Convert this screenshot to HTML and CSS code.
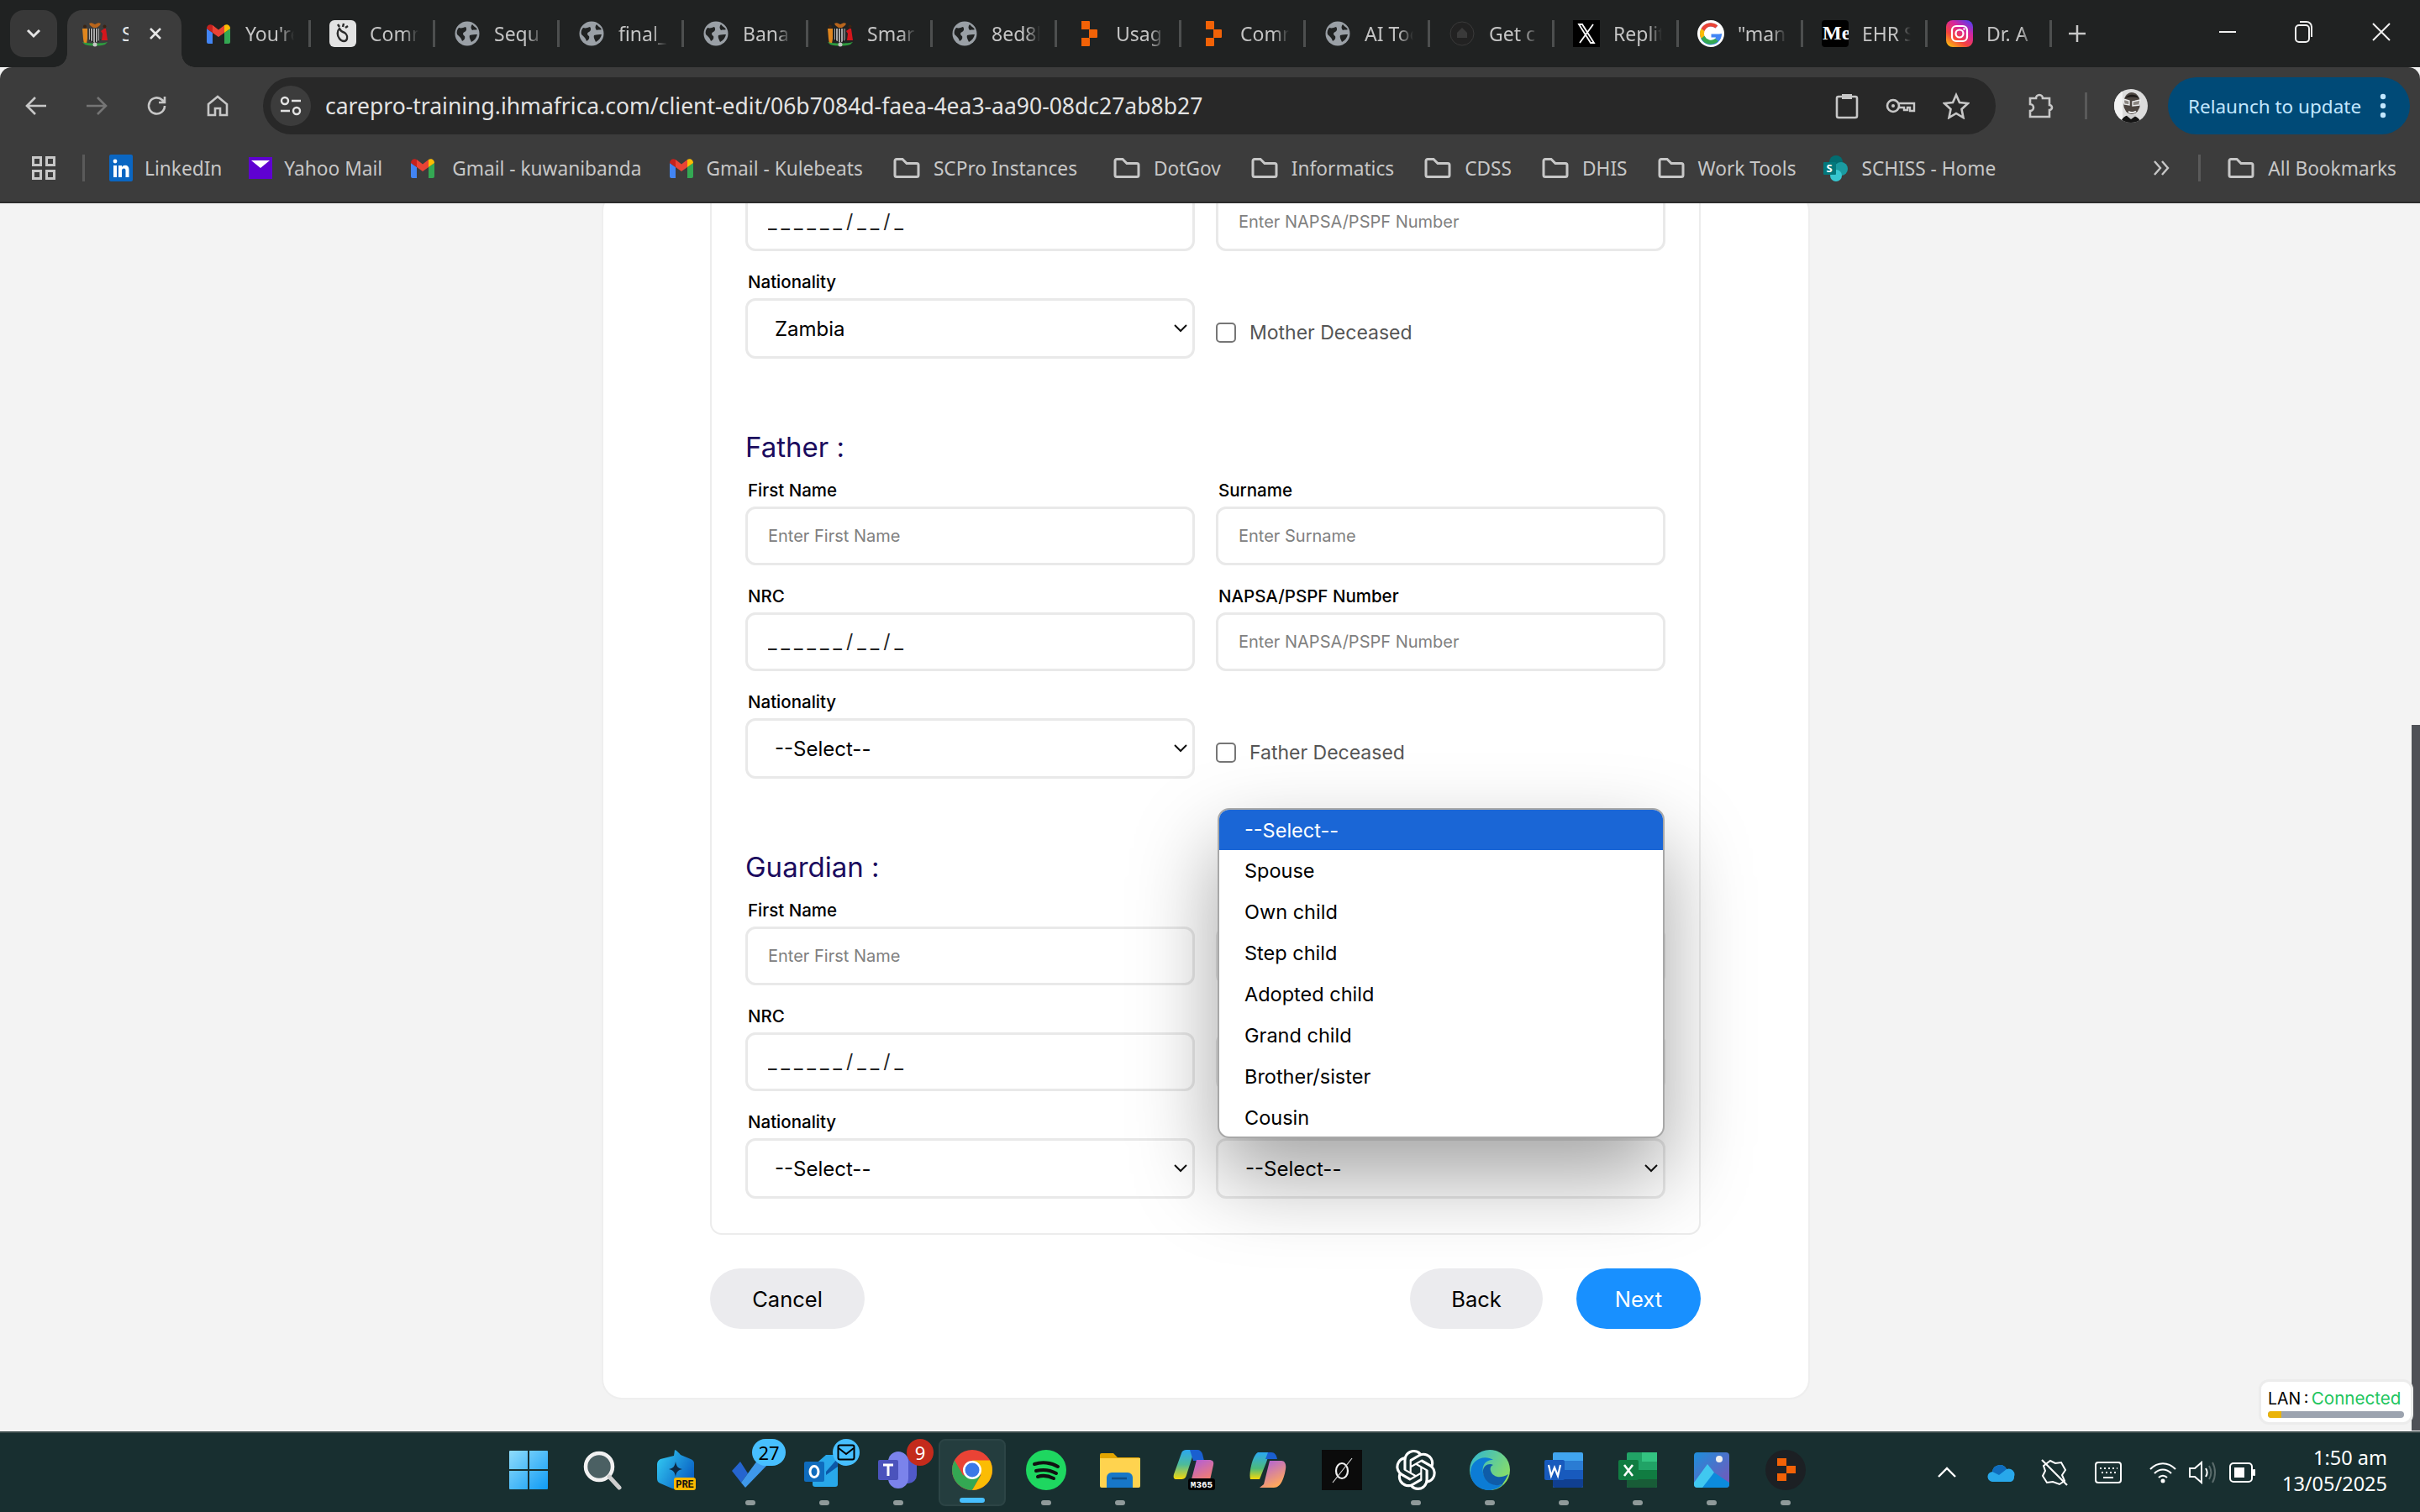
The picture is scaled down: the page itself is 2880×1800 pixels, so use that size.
FILE: index.html
```html
<!DOCTYPE html>
<html lang="en">

<head>
    <meta charset="UTF-8" />
    <title>Client Edit | SmartCare Pro</title>
    <link rel="stylesheet" href="styles.css">
</head>

<body>
    <svg class="defs" width="0" height="0">
        <symbol id="globe" viewBox="0 0 32 32">
            <circle cx="16" cy="16" r="14.5" fill="#9aa0a6" />
            <path fill="#202222" d="M6 9c3 1 5 0 8-1 2 2 1 5-1 6-3 1-2 4 0 5 1 3-1 5-3 6-1-4-4-6-6-8-1-3 0-6 2-8zM22 5c1 2 4 3 6 6-2 1-4 0-6 1-2-2-2-5 0-7zM19 18c3-1 6-1 9-1-1 4-3 7-7 9-1-3-3-5-2-8z" />
        </symbol>
        <symbol id="gmail" viewBox="0 0 32 32">
            <path fill="#4285f4" d="M2 28V10l7 5v13H4a2 2 0 0 1-2-2z" />
            <path fill="#34a853" d="M23 28V15l7-5v16a2 2 0 0 1-2 2z" />
            <path fill="#ea4335" d="M9 15l7 5 7-5V6l-7 5.500L9 6z" />
            <path fill="#c5221f" d="M2 10c0-4 4-6 7-4v9z" />
            <path fill="#fbbc04" d="M30 10c0-4-4-6-7-4v9z" />
        </symbol>
        <symbol id="replit" viewBox="0 0 32 32">
            <path fill="#f26207" d="M7 1h9a1 1 0 0 1 1 1v8a1 1 0 0 1-1 1H7zM16 11h9a1 1 0 0 1 1 1v8a1 1 0 0 1-1 1h-9zM7 21h9a1 1 0 0 1 1 1v8a1 1 0 0 1-1 1H7z" />
        </symbol>
        <symbol id="arms" viewBox="0 0 32 32">
            <path fill="#b8651c" d="M9 4c3-2 5 0 7 1 2-1 4-3 7-1-1 3-4 4-5 5h-4c-1-1-4-2-5-5z" />
            <path fill="#e0861e" d="M1 10h6v12l-1 6H3l-1-6z" />
            <circle cx="4" cy="7.500" r="2" fill="#3a2414" />
            <path fill="#d4161c" d="M27 10h2l2 14h-7l1-8-2-3z" />
            <circle cx="27.500" cy="7.500" r="2" fill="#3a2414" />
            <path fill="#e8e8e8" d="M9 10h14v13l-7 4-7-4z" />
            <path stroke="#111" stroke-width="1.600" d="M10.500 10v15M13.500 10v16M16.500 10v17M19.500 10v16M22 10v14" fill="none" />
            <path fill="#2f9b3f" d="M1 26c6 2 24 2 30 0l-3 3c-6 2-18 2-24 0z" />
            <circle cx="16" cy="29" r="2.500" fill="#c4c4c4" />
        </symbol>
        <symbol id="folder" viewBox="0 0 32 24">
            <path fill="none" stroke="#c7c7c7" stroke-width="3" d="M2 3.500a2 2 0 0 1 2-2h7l5 5h12a2 2 0 0 1 2 2v12a2 2 0 0 1-2 2H4a2 2 0 0 1-2-2z" />
        </symbol>
        <symbol id="chevron" viewBox="0 0 16 10">
            <path d="M1 1l7 7 7-7" fill="none" stroke="#111" stroke-width="2" />
        </symbol>
    </svg>

    <!-- browser chrome -->
    <div class="tabstrip">
        <div class="tab-search">
            <svg width="18" height="12" viewBox="0 0 18 12"><path d="M2 2l7 7 7-7" fill="none" stroke="#e3e3e3" stroke-width="3" /></svg>
        </div>
        <div class="tab active">
            <svg class="fav" width="32" height="32"><use href="#arms" /></svg>
            <span class="tab-title">SmartCare</span>
            <svg class="tab-close" width="16" height="16" viewBox="0 0 16 16"><path d="M2 2l12 12M14 2L2 14" stroke="#e8e8e8" stroke-width="2.500" /></svg>
        </div>
        <div class="tab first">
            <svg class="fav" width="32" height="32"><use href="#gmail" /></svg>
            <span class="tab-title">You're</span>
        </div>
        <div class="tab">
            <svg class="fav" width="32" height="32" viewBox="0 0 32 32"><rect width="32" height="32" rx="6" fill="#e3e3e3" /><path d="M12 10c-3 3-3 8 0 12s8 4 9 0-2-7-5-8-3-3-4-4zM10 5l2 3M17 4l-1 4M22 7l-3 2" fill="none" stroke="#2a2a2a" stroke-width="2.400" /></svg>
            <span class="tab-title">Comm</span>
        </div>
        <div class="tab">
            <svg class="fav" width="32" height="32"><use href="#globe" /></svg>
            <span class="tab-title">Sequ</span>
        </div>
        <div class="tab">
            <svg class="fav" width="32" height="32"><use href="#globe" /></svg>
            <span class="tab-title">final_</span>
        </div>
        <div class="tab">
            <svg class="fav" width="32" height="32"><use href="#globe" /></svg>
            <span class="tab-title">Bana</span>
        </div>
        <div class="tab">
            <svg class="fav" width="32" height="32"><use href="#arms" /></svg>
            <span class="tab-title">Smar</span>
        </div>
        <div class="tab">
            <svg class="fav" width="32" height="32"><use href="#globe" /></svg>
            <span class="tab-title">8ed8b</span>
        </div>
        <div class="tab">
            <svg class="fav" width="32" height="32"><use href="#replit" /></svg>
            <span class="tab-title">Usag</span>
        </div>
        <div class="tab">
            <svg class="fav" width="32" height="32"><use href="#replit" /></svg>
            <span class="tab-title">Comm</span>
        </div>
        <div class="tab">
            <svg class="fav" width="32" height="32"><use href="#globe" /></svg>
            <span class="tab-title">AI Too</span>
        </div>
        <div class="tab">
            <svg class="fav" width="32" height="32" viewBox="0 0 32 32"><circle cx="16" cy="16" r="14" fill="#222" stroke="#3a3a3a" /><path d="M10 15l6-6 6 6v6H10z" fill="#3a3a3a" /></svg>
            <span class="tab-title">Get c</span>
        </div>
        <div class="tab">
            <svg class="fav" width="32" height="32" viewBox="0 0 32 32"><rect width="32" height="32" fill="#000" /><path d="M7 5h4l14 22h-4zM24 5L8 27" fill="none" stroke="#fff" stroke-width="1.800" /></svg>
            <span class="tab-title">Replit</span>
        </div>
        <div class="tab">
            <svg class="fav" width="32" height="32" viewBox="0 0 32 32"><circle cx="16" cy="16" r="16" fill="#fff" /><path d="M26 16.500H16.500v4h5.500c-.7 2.500-3 4-6 4a8.500 8.500 0 0 1 0-17c2 0 4 .8 5.300 2l3-3A13 13 0 1 0 29 16z" fill="#4285f4" /><path d="M4.500 10l4 3c1.300-3.200 4-5.500 7.500-5.500 2 0 4 .8 5.300 2l3-3A13 13 0 0 0 4.500 10z" fill="#ea4335" /><path d="M4.500 10a13 13 0 0 0 0 12l4-3.200a8.600 8.600 0 0 1 0-5.800z" fill="#fbbc04" /><path d="M4.500 22A13 13 0 0 0 25 25l-3.800-3a8.500 8.500 0 0 1-12.700-3.200z" fill="#34a853" /></svg>
            <span class="tab-title">"man</span>
        </div>
        <div class="tab">
            <svg class="fav" width="32" height="32" viewBox="0 0 32 32"><rect width="32" height="32" rx="4" fill="#000" /><text x="1" y="23" class="me-text">Me</text></svg>
            <span class="tab-title">EHR S</span>
        </div>
        <div class="tab">
            <svg class="fav" width="32" height="32" viewBox="0 0 32 32"><defs><linearGradient id="ig" x1="0.100" y1="1" x2="0.800" y2="0"><stop offset="0" stop-color="#fdc30d" /><stop offset="0.350" stop-color="#f5433f" /><stop offset="0.700" stop-color="#d6249f" /><stop offset="1" stop-color="#5b3dea" /></linearGradient></defs><rect width="32" height="32" rx="8" fill="url(#ig)" /><rect x="7" y="7" width="18" height="18" rx="5" fill="none" stroke="#fff" stroke-width="2.200" /><circle cx="16" cy="16" r="4.500" fill="none" stroke="#fff" stroke-width="2.200" /><circle cx="21.500" cy="10.500" r="1.200" fill="#fff" /></svg>
            <span class="tab-title">Dr. A</span>
        </div>
        <div class="tab-new">
            <svg width="20" height="20" viewBox="0 0 20 20"><path d="M10 0v20M0 10h20" stroke="#c7c7c7" stroke-width="2.500" /></svg>
        </div>
        <div class="win-controls">
            <svg width="20" height="20" viewBox="0 0 20 20"><path d="M0 10h20" stroke="#f0f0f0" stroke-width="2" /></svg>
            <svg width="22" height="26" viewBox="0 0 22 26"><rect x="1" y="5" width="16" height="20" rx="4" fill="none" stroke="#f0f0f0" stroke-width="2" /><path d="M6 1h8a6 6 0 0 1 6 6v12" fill="none" stroke="#f0f0f0" stroke-width="2" /></svg>
            <svg width="22" height="22" viewBox="0 0 22 22"><path d="M1 1l20 20M21 1L1 21" stroke="#f0f0f0" stroke-width="2" /></svg>
        </div>
    </div>

    <div class="toolbar">
        <div class="nav-btns">
            <svg width="26" height="24" viewBox="0 0 26 24"><path d="M25 12H3M12 2L2 12l10 10" fill="none" stroke="#c7c7c7" stroke-width="2.600" /></svg>
            <svg width="26" height="24" viewBox="0 0 26 24"><path d="M1 12h22M14 2l10 10-10 10" fill="none" stroke="#757575" stroke-width="2.600" /></svg>
            <svg width="26" height="26" viewBox="0 0 26 26"><path d="M22 13a9.500 9.500 0 1 1-3-7l3 3M22 2v7h-7" fill="none" stroke="#c7c7c7" stroke-width="2.600" /></svg>
            <svg width="26" height="26" viewBox="0 0 26 26"><path d="M2 11l11-9 11 9v13h-8v-8h-6v8H2z" fill="none" stroke="#c7c7c7" stroke-width="2.600" /></svg>
        </div>
        <div class="omnibox">
            <div class="site-info">
                <svg width="26" height="24" viewBox="0 0 26 24"><circle cx="6" cy="6" r="4" fill="none" stroke="#e3e3e3" stroke-width="2.400" /><path d="M14 6h11M1 18h11" stroke="#e3e3e3" stroke-width="2.400" /><circle cx="20" cy="18" r="4" fill="none" stroke="#e3e3e3" stroke-width="2.400" /></svg>
            </div>
            <span class="url">carepro-training.ihmafrica.com/client-edit/06b7084d-faea-4ea3-aa90-08dc27ab8b27</span>
            <div class="omni-icons">
                <svg width="28" height="32" viewBox="0 0 28 32"><rect x="2" y="5" width="24" height="25" rx="2" fill="none" stroke="#c7c7c7" stroke-width="2.600" /><path d="M8 2h12v6H8z" fill="#c7c7c7" /></svg>
                <svg width="36" height="20" viewBox="0 0 36 20"><circle cx="9" cy="10" r="7" fill="none" stroke="#c7c7c7" stroke-width="2.600" /><circle cx="9" cy="10" r="2" fill="#c7c7c7" /><path d="M16 7h18v9h-5v-4h-3v3h-4v-3h-6" fill="none" stroke="#c7c7c7" stroke-width="2.400" /></svg>
                <svg width="32" height="32" viewBox="0 0 32 32"><path d="M16 3l4 9 10 1-7.500 7 2 10L16 25l-8.500 5 2-10L2 13l10-1z" fill="none" stroke="#c7c7c7" stroke-width="2.600" /></svg>
            </div>
        </div>
        <svg class="ext-icon" width="32" height="32" viewBox="0 0 32 32"><path d="M3 7h7a4 4 0 0 1 8 0h8v8a3 3 0 0 1 0 6v8H3v-7a4 4 0 0 0 0-8z" fill="none" stroke="#c7c7c7" stroke-width="2.600" /></svg>
        <div class="tb-sep"></div>
        <svg class="avatar" width="40" height="40" viewBox="0 0 40 40"><defs><clipPath id="av"><circle cx="20" cy="20" r="20" /></clipPath></defs><g clip-path="url(#av)"><rect width="40" height="40" fill="#dcdcdc" /><path d="M0 0h10v40H0z" fill="#f2f2f2" /><path d="M8 40c1-6 6-9 11-9s11 3 13 9z" fill="#141414" /><path d="M14 31l6 5 7-5z" fill="#cfcfcf" /><ellipse cx="21" cy="17" rx="10" ry="13" fill="#4c4540" /><path d="M13 11c3-5 13-6 17 0-5-2-12-2-17 0z" fill="#1d1a18" /><path d="M11 12l7 2v5l-6-1zM22 15l9-2-1 6-8 1z" fill="#8a8580" stroke="#eaeaea" stroke-width="1.400" /><path d="M17 27c3 1.500 6 1.500 9-.5" stroke="#e8e8e8" stroke-width="2" fill="none" /></g></svg>
        <div class="relaunch">
            <span>Relaunch to update</span>
            <svg width="10" height="30" viewBox="0 0 10 30"><circle cx="5" cy="4" r="3.200" fill="#c2e7ff" /><circle cx="5" cy="15" r="3.200" fill="#c2e7ff" /><circle cx="5" cy="26" r="3.200" fill="#c2e7ff" /></svg>
        </div>
    </div>

    <div class="bookmarks">
        <svg class="apps" width="28" height="28" viewBox="0 0 28 28"><path d="M1.500 1.500h9v9h-9zM17.500 1.500h9v9h-9zM1.500 17.500h9v9h-9zM17.500 17.500h9v9h-9z" fill="none" stroke="#c7c7c7" stroke-width="3" /></svg>
        <div class="bm-sep"></div>
        <a class="bm">
            <svg width="28" height="32" viewBox="0 0 28 32"><rect width="28" height="32" rx="2" fill="#0a66c2" /><path d="M5 13h4v14H5zM11 13h4v2c1-1.500 2-2.200 4-2.200 3 0 4.500 2 4.500 5V27h-4v-8c0-1.500-.6-2.500-2-2.500s-2.500 1-2.500 2.500v8h-4z" fill="#fff" /><circle cx="7" cy="8" r="2.400" fill="#fff" /></svg>
            LinkedIn
        </a>
        <a class="bm">
            <svg width="28" height="28" viewBox="0 0 28 28"><rect y="1" width="28" height="26" fill="#5f01d1" /><path d="M3 5h22l-11 9z" fill="#fff" /></svg>
            Yahoo Mail
        </a>
        <a class="bm gm">
            <svg width="32" height="32"><use href="#gmail" /></svg>
            Gmail - kuwanibanda
        </a>
        <a class="bm gm second">
            <svg width="32" height="32"><use href="#gmail" /></svg>
            Gmail - Kulebeats
        </a>
        <a class="bm folder wide"><svg width="32" height="24"><use href="#folder" /></svg>SCPro Instances</a>
        <a class="bm folder"><svg width="32" height="24"><use href="#folder" /></svg>DotGov</a>
        <a class="bm folder"><svg width="32" height="24"><use href="#folder" /></svg>Informatics</a>
        <a class="bm folder"><svg width="32" height="24"><use href="#folder" /></svg>CDSS</a>
        <a class="bm folder"><svg width="32" height="24"><use href="#folder" /></svg>DHIS</a>
        <a class="bm folder tight"><svg width="32" height="24"><use href="#folder" /></svg>Work Tools</a>
        <a class="bm">
            <svg width="32" height="32" viewBox="0 0 32 32"><circle cx="15" cy="9" r="8" fill="#036c70" /><circle cx="21" cy="17" r="8" fill="#1a9ba1" /><circle cx="15" cy="25" r="7" fill="#37c6d0" /><rect x="0" y="9" width="15" height="15" rx="1" fill="#03787c" /><text x="3.500" y="21" class="sp-text">S</text></svg>
            SCHISS - Home
        </a>
        <div class="bm-right">
            <svg width="20" height="20" viewBox="0 0 20 20"><path d="M2 2l7 8-7 8M11 2l7 8-7 8" fill="none" stroke="#c7c7c7" stroke-width="2.400" /></svg>
            <div class="bm-sep"></div>
            <a class="bm folder"><svg width="32" height="24"><use href="#folder" /></svg>All Bookmarks</a>
        </div>
    </div>

    <!-- page -->
    <div class="page">
        <div class="page-main">
            <div class="card">
                <div class="form-box">
                    <div class="row">
                        <div class="field"><input class="mask" type="text" value="______/__/_" /></div>
                        <div class="field"><input type="text" placeholder="Enter NAPSA/PSPF Number" /></div>
                    </div>
                    <div class="row">
                        <div class="field">
                            <label>Nationality</label>
                            <div class="select-wrap">
                                <select><option>Zambia</option></select>
                                <svg width="16" height="10"><use href="#chevron" /></svg>
                            </div>
                        </div>
                        <label class="check"><input type="checkbox" />Mother Deceased</label>
                    </div>

                    <h3>Father :</h3>
                    <div class="row no-top">
                        <div class="field"><label>First Name</label><input type="text" placeholder="Enter First Name" /></div>
                        <div class="field"><label>Surname</label><input type="text" placeholder="Enter Surname" /></div>
                    </div>
                    <div class="row">
                        <div class="field"><label>NRC</label><input class="mask" type="text" value="______/__/_" /></div>
                        <div class="field"><label>NAPSA/PSPF Number</label><input type="text" placeholder="Enter NAPSA/PSPF Number" /></div>
                    </div>
                    <div class="row">
                        <div class="field">
                            <label>Nationality</label>
                            <div class="select-wrap">
                                <select><option>--Select--</option></select>
                                <svg width="16" height="10"><use href="#chevron" /></svg>
                            </div>
                        </div>
                        <label class="check"><input type="checkbox" />Father Deceased</label>
                    </div>

                    <h3>Guardian :</h3>
                    <!-- the right column of these rows sits under the open list -->
                    <div class="row no-top">
                        <div class="field"><label>First Name</label><input type="text" placeholder="Enter First Name" /></div>
                        <div class="field"><label></label><input type="text" /></div>
                    </div>
                    <div class="row">
                        <div class="field"><label>NRC</label><input class="mask" type="text" value="______/__/_" /></div>
                        <div class="field"><label></label><input type="text" /></div>
                    </div>
                    <div class="row">
                        <div class="field">
                            <label>Nationality</label>
                            <div class="select-wrap">
                                <select><option>--Select--</option></select>
                                <svg width="16" height="10"><use href="#chevron" /></svg>
                            </div>
                        </div>
                        <div class="field">
                            <label></label>
                            <div class="select-wrap">
                                <select><option>--Select--</option></select>
                                <svg width="16" height="10"><use href="#chevron" /></svg>
                                <ul class="dropdown">
                                    <li class="selected">--Select--</li>
                                    <li>Spouse</li>
                                    <li>Own child</li>
                                    <li>Step child</li>
                                    <li>Adopted child</li>
                                    <li>Grand child</li>
                                    <li>Brother/sister</li>
                                    <li>Cousin</li>
                                </ul>
                            </div>
                        </div>
                    </div>
                </div>

                <div class="form-actions">
                    <button class="btn">Cancel</button>
                    <div class="actions-right">
                        <button class="btn back">Back</button>
                        <button class="btn primary">Next</button>
                    </div>
                </div>
            </div>
        </div>
        <div class="scrollbar"><div class="thumb"></div></div>

        <div class="lan-status">
            <div class="lan-text">LAN : <span>Connected</span></div>
            <div class="lan-bar"><div class="lan-fill"></div></div>
        </div>
    </div>

    <!-- windows taskbar -->
    <div class="taskbar">
        <div class="tb-apps">
            <div class="tb-item">
                <svg width="46" height="46" viewBox="0 0 46 46"><defs><linearGradient id="win" x1="0" y1="0" x2="1" y2="1"><stop offset="0" stop-color="#8fdcfb" /><stop offset="1" stop-color="#0f9bf5" /></linearGradient></defs><path fill="url(#win)" d="M1 0h21v22H0V1a1 1 0 0 1 1-1zM24 0h21a1 1 0 0 1 1 1v21H24zM0 24h22v22H1a1 1 0 0 1-1-1zM24 24h22v21a1 1 0 0 1-1 1H24z" /></svg>
            </div>
            <div class="tb-item">
                <svg width="48" height="48" viewBox="0 0 48 48"><circle cx="20" cy="20" r="16" fill="#4b6063" stroke="#f1f1f1" stroke-width="4.500" /><path d="M32 32l12 13" stroke="#cfcfcf" stroke-width="5" stroke-linecap="round" /></svg>
            </div>
            <div class="tb-item">
                <svg width="46" height="48" viewBox="0 0 46 48"><defs><linearGradient id="cpre" x1="0" y1="0" x2="1" y2="0.600"><stop offset="0" stop-color="#35d0f5" /><stop offset="1" stop-color="#0a62c4" /></linearGradient></defs><path fill="url(#cpre)" d="M21 0c3 1 5 4 7 6l12 5c3 1 4 3 4 5v19c0 3-2 5-4 6l-13 5c-3 1-6 1-9 0L4 40c-3-1-4-3-4-6V17c0-3 2-5 4-6l16-4z" /><path fill="#0e2a44" d="M22 14c1 6 3 8 8 9-5 1-7 3-8 9-1-6-3-8-8-9 5-1 7-3 8-9z" /><rect x="20" y="33" width="26" height="15" rx="3" fill="#fdb900" /><text x="33" y="45" class="pre-text">PRE</text></svg>
            </div>
            <div class="tb-item running">
                <svg width="44" height="42" viewBox="0 0 44 42"><path fill="#2564cf" d="M0 22l10-11 9 14-8 11z" /><path fill="#3f98ea" d="M11 36L33 6l11 7-28 29z" /></svg>
                <span class="badge blue">27</span>
            </div>
            <div class="tb-item running">
                <svg width="48" height="40" viewBox="0 0 48 40"><path fill="#28a8ea" d="M10 16L26 2h14v35a3 3 0 0 1-3 3H13a3 3 0 0 1-3-3z" /><path fill="#0c58a8" d="M26 22l14-16v10L26 26z" /><rect y="10" width="24" height="24" rx="2" fill="#0f6cbd" /><ellipse cx="12" cy="22" rx="5" ry="6.500" fill="none" stroke="#fff" stroke-width="3" /></svg>
                <span class="badge blue mail"><svg width="22" height="20" viewBox="0 0 22 20"><rect x="1.500" y="1.500" width="19" height="17" rx="2" fill="none" stroke="#000" stroke-width="2" /><path d="M2 5l9 7 9-7" fill="none" stroke="#000" stroke-width="2" /></svg></span>
            </div>
            <div class="tb-item running">
                <svg width="48" height="44" viewBox="0 0 48 44"><rect x="22" y="6" width="24" height="32" rx="10" fill="#5059c9" /><rect x="12" y="0" width="24" height="44" rx="12" fill="#7b83eb" /><rect y="10" width="24" height="24" rx="2" fill="#4b53bc" /><path d="M6 16h12M12 16v13" stroke="#fff" stroke-width="3" /></svg>
                <span class="badge red">9</span>
            </div>
            <div class="tb-item running active-app">
                <svg width="48" height="48" viewBox="0 0 48 48"><circle cx="24" cy="24" r="24" fill="#ea4335" /><path fill="#34a853" d="M3 12.500A24 24 0 0 0 24 48l10.500-18L24 33 13 30z" /><path fill="#fbbc04" d="M24 48A24 24 0 0 0 45 12.500H24l10.500 17.500z" /><circle cx="24" cy="24" r="11" fill="#fff" /><circle cx="24" cy="24" r="8.500" fill="#3b78e7" /></svg>
            </div>
            <div class="tb-item running">
                <svg width="48" height="48" viewBox="0 0 48 48"><circle cx="24" cy="24" r="24" fill="#1ed760" /><path d="M10 17c9-3 20-2 28 3M12 25c8-2 17-1 24 3M14 32c6-2 13-1 19 2" fill="none" stroke="#111" stroke-width="4" stroke-linecap="round" /></svg>
            </div>
            <div class="tb-item running">
                <svg width="48" height="42" viewBox="0 0 48 42"><path d="M0 3a2 2 0 0 1 2-2h14l5 5h25a2 2 0 0 1 2 2v5H0z" fill="#e3a500" /><path d="M0 7h48v33a2 2 0 0 1-2 2H2a2 2 0 0 1-2-2z" fill="#ffd34f" /><path d="M8 42V30a6 6 0 0 1 6-6h19a6 6 0 0 1 6 6v12z" fill="#1777c8" /><path d="M14 31h18" stroke="#0f4f8a" stroke-width="2.500" /></svg>
            </div>
            <div class="tb-item">
                <svg width="50" height="48" viewBox="0 0 50 48"><defs><linearGradient id="m365" x1="0" y1="0" x2="0" y2="1"><stop offset="0" stop-color="#2ba8f2" /><stop offset="0.500" stop-color="#4dbb9a" /><stop offset="1" stop-color="#f5d90a" /></linearGradient><linearGradient id="m365b" x1="0" y1="0" x2="0.500" y2="1"><stop offset="0" stop-color="#a95be5" /><stop offset="1" stop-color="#f77f6a" /></linearGradient></defs><path fill="url(#m365)" d="M10 4c1-3 3-4 6-4h10l-3 8-7 22c-1 4-3 5-7 5H4c-3 0-4-2-3-6z" /><path fill="#1a5fd0" d="M20 0h9c3 0 5 2 6 5l2 8H24z" /><path fill="url(#m365b)" d="M28 12h15c4 0 6 2 5 6l-4 18c-1 3-3 5-6 5H18l4-6z" /><rect x="18" y="34" width="32" height="14" rx="3" fill="#000" /><text x="34" y="45" class="m365-text">M365</text></svg>
            </div>
            <div class="tb-item">
                <svg width="44" height="42" viewBox="0 0 44 42"><defs><linearGradient id="cop" x1="0" y1="0" x2="0" y2="1"><stop offset="0" stop-color="#2ba8f2" /><stop offset="0.600" stop-color="#4dbb7a" /><stop offset="1" stop-color="#f5d90a" /></linearGradient><linearGradient id="copb" x1="0" y1="0" x2="0.500" y2="1"><stop offset="0" stop-color="#a95be5" /><stop offset="1" stop-color="#ffa85c" /></linearGradient></defs><path fill="url(#cop)" d="M10 0h14l-4 12-8 20H1c-2-6 2-28 9-32z" /><path fill="#1a5fd0" d="M22 0h4c4 0 6 3 7 8h-14z" /><path fill="url(#copb)" d="M24 10h14c4 0 6 4 5 10-2 12-6 22-14 22H12l5-4z" /></svg>
            </div>
            <div class="tb-item">
                <svg width="48" height="48" viewBox="0 0 48 48"><rect width="48" height="48" fill="#0b0b0b" /><ellipse cx="24" cy="25" rx="7" ry="9" fill="none" stroke="#f0f0f0" stroke-width="2.200" /><path d="M13 39L36 10" stroke="#d8d8d8" stroke-width="1.200" /></svg>
            </div>
            <div class="tb-item running">
                <svg width="48" height="48" viewBox="0 0 24 24"><path fill="#fff" d="M22.2819 9.8211a5.9847 5.9847 0 0 0-.5157-4.9108 6.0462 6.0462 0 0 0-6.5098-2.9A6.0651 6.0651 0 0 0 4.9807 4.1818a5.9847 5.9847 0 0 0-3.9977 2.9 6.0462 6.0462 0 0 0 .7427 7.0966 5.98 5.98 0 0 0 .511 4.9107 6.051 6.051 0 0 0 6.5146 2.9001A5.9847 5.9847 0 0 0 13.2599 24a6.0557 6.0557 0 0 0 5.7718-4.2058 5.9894 5.9894 0 0 0 3.9977-2.9001 6.0557 6.0557 0 0 0-.7475-7.0729zm-9.022 12.6081a4.4755 4.4755 0 0 1-2.8764-1.0408l.1419-.0804 4.7783-2.7582a.7948.7948 0 0 0 .3927-.6813v-6.7369l2.02 1.1686a.071.071 0 0 1 .038.052v5.5826a4.504 4.504 0 0 1-4.4945 4.4944zm-9.6607-4.1254a4.4708 4.4708 0 0 1-.5346-3.0137l.142.0852 4.783 2.7582a.7712.7712 0 0 0 .7806 0l5.8428-3.3685v2.3324a.0804.0804 0 0 1-.0332.0615L9.74 19.9502a4.4992 4.4992 0 0 1-6.1408-1.6464zM2.3408 7.8956a4.485 4.485 0 0 1 2.3655-1.9728V11.6a.7664.7664 0 0 0 .3879.6765l5.8144 3.3543-2.0201 1.1685a.0757.0757 0 0 1-.071 0l-4.8303-2.7865A4.504 4.504 0 0 1 2.3408 7.872zm16.5963 3.8558L13.1038 8.364 15.1192 7.2a.0757.0757 0 0 1 .071 0l4.8303 2.7913a4.4944 4.4944 0 0 1-.6765 8.1042v-5.6772a.79.79 0 0 0-.407-.667zm2.0107-3.0231l-.142-.0852-4.7735-2.7818a.7759.7759 0 0 0-.7854 0L9.409 9.2297V6.8974a.0662.0662 0 0 1 .0284-.0615l4.8303-2.7866a4.4992 4.4992 0 0 1 6.6802 4.66zM8.3065 12.863l-2.02-1.1638a.0804.0804 0 0 1-.038-.0567V6.0742a4.4992 4.4992 0 0 1 7.3757-3.4537l-.142.0805L8.704 5.459a.7948.7948 0 0 0-.3927.6813zm1.0976-2.3654l2.602-1.4998 2.6069 1.4998v2.9994l-2.5974 1.4997-2.6067-1.4997Z" /></svg>
            </div>
            <div class="tb-item running">
                <svg width="48" height="48" viewBox="0 0 48 48"><defs><linearGradient id="edge" x1="0" y1="0" x2="1" y2="0.700"><stop offset="0" stop-color="#2cb5d6" /><stop offset="1" stop-color="#8fe060" /></linearGradient></defs><circle cx="24" cy="24" r="24" fill="url(#edge)" /><path fill="#0c7cd5" d="M1 27C1 12 17 5 28 12c-8-1-14 6-12 15 2 10 11 17 24 14-5 4-10 7-17 7C10 48 1 38 1 27z" /><path fill="#0f5ca8" d="M16 27c-1-8 7-12 12-9-3 1-4 4-3 7 2 7 11 10 21 4-2 5-5 9-7 12-11 4-22-3-23-14z" /></svg>
            </div>
            <div class="tb-item running">
                <svg width="46" height="42" viewBox="0 0 46 42"><rect x="10" y="0" width="36" height="42" rx="2" fill="#41a5ee" /><rect x="10" y="10" width="36" height="11" fill="#2b7cd3" /><rect x="10" y="21" width="36" height="11" fill="#185abd" /><path d="M10 32h36v8a2 2 0 0 1-2 2H12a2 2 0 0 1-2-2z" fill="#103f91" /><rect x="0" y="9" width="24" height="24" rx="2" fill="#185abd" /><path d="M5 15l3 13 4-10 4 10 3-13" fill="none" stroke="#fff" stroke-width="2.200" /></svg>
            </div>
            <div class="tb-item running">
                <svg width="46" height="42" viewBox="0 0 46 42"><rect x="10" y="0" width="36" height="42" rx="2" fill="#21a366" /><rect x="28" y="0" width="18" height="11" fill="#33c481" /><rect x="28" y="11" width="18" height="10" fill="#21a366" /><rect x="10" y="21" width="36" height="11" fill="#107c41" /><path d="M10 32h36v8a2 2 0 0 1-2 2H12a2 2 0 0 1-2-2z" fill="#185c37" /><rect x="0" y="9" width="24" height="24" rx="2" fill="#107c41" /><path d="M7 15l10 13M17 15L7 28" stroke="#fff" stroke-width="2.600" /></svg>
            </div>
            <div class="tb-item running">
                <svg width="42" height="42" viewBox="0 0 42 42"><defs><linearGradient id="ph" x1="0" y1="0" x2="1" y2="1"><stop offset="0" stop-color="#1d8fdc" /><stop offset="1" stop-color="#7a54b8" /></linearGradient></defs><rect width="42" height="42" rx="4" fill="url(#ph)" /><ellipse cx="30" cy="8" rx="4" ry="4" fill="#eee" /><path fill="#40c8f0" d="M0 36l16-22 8 10-12 18H4a4 4 0 0 1-4-4z" /><path fill="#0c8bdc" d="M10 42l14-18 18 12v2a4 4 0 0 1-4 4z" /></svg>
            </div>
            <div class="tb-item running">
                <svg width="48" height="48" viewBox="0 0 48 48"><circle cx="24" cy="24" r="24" fill="#1c2024" /><path fill="#f26207" d="M14 10h11v9H14zM25 19h11v9H25zM14 28h11v9H14z" /></svg>
            </div>
        </div>

        <div class="tray">
            <svg class="t-caret" width="24" height="14" viewBox="0 0 24 14"><path d="M2 12L12 2l10 10" fill="none" stroke="#fff" stroke-width="2.400" /></svg>
            <svg class="t-cloud" width="34" height="22" viewBox="0 0 34 22"><path d="M8 22a6 6 0 0 1-1-12 9 9 0 0 1 17-3 7 7 0 0 1 9 9 6 6 0 0 1-4 6z" fill="#28a8ea" /><path d="M7 10a9 9 0 0 1 17-3l-9 7z" fill="#0f6cbd" /></svg>
            <svg class="t-net" width="34" height="34" viewBox="0 0 34 34"><path d="M12 3l6 3 7-1 5 9-4 6 3 7-6 4-8-3-7 1-5-8 3-6-2-6z" fill="none" stroke="#fff" stroke-width="2" /><path d="M2 2l30 30" stroke="#fff" stroke-width="2.200" /></svg>
            <svg class="t-kbd" width="32" height="26" viewBox="0 0 32 26"><rect x="1" y="1" width="30" height="24" rx="3" fill="none" stroke="#fff" stroke-width="2" /><path d="M6 8h2M11 8h2M16 8h2M21 8h2M26 8h1M8 13h2M13 13h2M18 13h2M23 13h2M10 19h12" stroke="#fff" stroke-width="2" /></svg>
            <svg class="t-wifi" width="32" height="26" viewBox="0 0 32 26"><path d="M1 9c9-9 21-9 30 0M6 14c6-6 14-6 20 0M11 19c3-3 7-3 10 0" fill="none" stroke="#fff" stroke-width="2.200" /><circle cx="16" cy="23" r="2.500" fill="#fff" /></svg>
            <svg class="t-vol" width="32" height="28" viewBox="0 0 32 28"><path d="M1 9h6l8-7v24l-8-7H1z" fill="none" stroke="#fff" stroke-width="2" /><path d="M20 9c2 3 2 7 0 10" fill="none" stroke="#fff" stroke-width="2" /><path d="M24 6c3 5 3 11 0 16M28 2c4 7 4 17 0 24" fill="none" stroke="#5a6b6b" stroke-width="2" /></svg>
            <svg class="t-batt" width="32" height="24" viewBox="0 0 32 24"><rect x="1" y="1" width="26" height="22" rx="4" fill="none" stroke="#fff" stroke-width="2" /><rect x="6" y="6" width="12" height="12" fill="#fff" /><rect x="28" y="8" width="3" height="8" rx="1" fill="#fff" /></svg>
            <div class="clock">
                <div>1:50 am</div>
                <div>13/05/2025</div>
            </div>
        </div>
    </div>
</body>

</html>
```

FILE: styles.css
```css
* {
    box-sizing: border-box;
}

html,
body {
    margin: 0;
    height: 1800px;
    overflow: hidden;
}

body {
    display: flex;
    flex-direction: column;
    font-family: "Inter", sans-serif;
    background: #f3f3f3;
}

.defs {
    position: absolute;
}

/* tabs */
.tabstrip {
    height: 80px;
    flex: none;
    background: #202222;
    display: flex;
    align-items: flex-start;
    padding: 12px 0 0 12px;
    font-family: "Noto Sans", sans-serif;
    font-size: 23px;
    color: #c4c4c4;
}

.tab-search {
    width: 56px;
    height: 56px;
    border-radius: 16px;
    background: #383838;
    margin-right: 12px;
    display: flex;
    align-items: center;
    justify-content: center;
}

.tab {
    width: 148px;
    height: 32px;
    margin-top: 12px;
    display: flex;
    align-items: center;
    padding-left: 22px;
    border-right: 3px solid #4d4f4f;
    position: relative;
}

.tab.active {
    width: 136px;
    height: 68px;
    margin: 0 6px 0 0;
    padding: 0 0 12px 17px;
    background: #3c3c3c;
    border: none;
    border-radius: 18px 18px 0 0;
    color: #e8e8e8;
}

.tab.active::before,
.tab.active::after {
    content: "";
    position: absolute;
    bottom: 0;
    width: 16px;
    height: 16px;
}

.tab.active::before {
    left: -16px;
    background: radial-gradient(circle at 0 0, #202222 15.5px, #3c3c3c 16px);
}

.tab.active::after {
    right: -16px;
    background: radial-gradient(circle at 100% 0, #202222 15.5px, #3c3c3c 16px);
}

.fav {
    flex: none;
}

.tab-title {
    margin-left: 16px;
    width: 58px;
    white-space: nowrap;
    overflow: hidden;
    mask-image: linear-gradient(to right, #000 70%, transparent);
}

.active .tab-title {
    width: 8px;
    mask-image: none;
}

.tab-close {
    margin-left: 24px;
}

.tab-new {
    width: 70px;
    height: 56px;
    display: flex;
    align-items: center;
    padding-left: 20px;
}

.win-controls {
    width: 204px;
    margin-left: auto;
    margin-right: 35px;
    height: 56px;
    display: flex;
    align-items: center;
    justify-content: space-between;
    margin-top: -2px;
}

/* toolbar */
.toolbar {
    height: 80px;
    flex: none;
    background: #3c3c3c;
    border-radius: 14px 14px 0 0;
    display: flex;
    align-items: flex-start;
    padding-top: 12px;
    position: relative;
}

.nav-btns {
    width: 313px;
    height: 68px;
    display: flex;
    align-items: center;
    padding-left: 30px;
    gap: 46px;
    flex: none;
}

.omnibox {
    width: 2062px;
    height: 68px;
    flex: none;
    background: #282828;
    border-radius: 34px;
    display: flex;
    align-items: center;
    padding-left: 9px;
}

.site-info {
    width: 48px;
    height: 48px;
    border-radius: 50%;
    background: #3c3c3c;
    display: flex;
    align-items: center;
    justify-content: center;
}

.url {
    margin-left: 17px;
    font-family: "Noto Sans", sans-serif;
    font-size: 26.5px;
    color: #e3e3e3;
    white-space: nowrap;
}

.omni-icons {
    margin-left: auto;
    margin-right: 31px;
    display: flex;
    align-items: center;
    gap: 32px;
}

.ext-icon {
    margin: 18px 0 0 38px;
    flex: none;
}

.tb-sep {
    width: 3px;
    height: 32px;
    background: #5a5a5a;
    margin: 18px 0 0 36px;
    flex: none;
}

.avatar {
    margin: 14px 0 0 32px;
    flex: none;
}

.relaunch {
    margin-left: 24px;
    width: 288px;
    height: 68px;
    flex: none;
    background: #004a77;
    border-radius: 34px;
    color: #c2e7ff;
    font-family: "Noto Sans", sans-serif;
    font-size: 22.5px;
    display: flex;
    align-items: center;
    justify-content: space-between;
    padding: 0 27px 0 24px;
    white-space: nowrap;
}

/* bookmarks */
.bookmarks {
    height: 82px;
    flex: none;
    background: #3c3c3c;
    border-bottom: 2px solid #2c2c2c;
    display: flex;
    align-items: center;
    padding-left: 38px;
    font-family: "Noto Sans", sans-serif;
    font-size: 22.7px;
    color: #c7c7c7;
}

.apps {
    flex: none;
}

.bm-sep {
    width: 3px;
    height: 32px;
    background: #5a5a5a;
    margin: 0 29px 0 32px;
    flex: none;
}

.bm {
    display: flex;
    align-items: center;
    gap: 14px;
    margin-right: 32px;
    white-space: nowrap;
}

.bm.gm {
    gap: 19px;
}

.bm.gm.second {
    gap: 13px;
    margin-right: 36px;
}

.bm.folder {
    gap: 16px;
    margin-right: 36px;
}

.bm.folder.wide {
    margin-right: 43px;
}

.bm.folder.tight {
    margin-right: 32px;
}

.bm-right {
    margin-left: auto;
    display: flex;
    align-items: center;
}

.bm-right .bm-sep {
    margin: 0 32px 0 34px;
}

.bm-right .bm.folder {
    margin-right: 28px;
}

/* page */
.page {
    flex: 1;
    min-height: 0;
    display: flex;
    position: relative;
    overflow: hidden;
}

.page-main {
    flex: 1;
    min-width: 0;
    display: flex;
    justify-content: center;
    overflow: hidden;
}

.card {
    width: 1438px;
    height: max-content;
    margin-top: -15px;
    flex: none;
    background: #fff;
    border: 2px solid #eeeeee;
    border-radius: 24px;
    padding: 0 128px 82px 127px;
}

.form-box {
    border: 2px solid #ececec;
    border-top: none;
    border-radius: 0 0 14px 14px;
    padding: 0 40px 41px 40px;
}

.row {
    display: grid;
    grid-template-columns: 535px 535px;
    column-gap: 25px;
    margin-top: 23px;
}

.row:first-child,
.row.no-top {
    margin-top: 0;
}

h3 {
    margin: 80px 0 13px;
    font-size: 33px;
    line-height: 50px;
    font-weight: 400;
    color: #1b0b5e;
}

.field label {
    display: block;
    height: 28px;
    line-height: 28px;
    margin: 0 0 5px 3px;
    font-size: 20.5px;
    font-weight: 500;
    color: #000;
}

.field input {
    width: 100%;
    height: 70px;
    border: 3px solid #e9e9e9;
    border-radius: 12px;
    padding: 0 24px;
    font-family: inherit;
    font-size: 20px;
    background: #fff;
    outline: none;
}

.field input::placeholder {
    color: #808080;
}

.field input.mask {
    font-size: 23px;
    letter-spacing: 5px;
    color: #222;
}

.select-wrap {
    position: relative;
}

.select-wrap select {
    width: 100%;
    height: 72px;
    display: block;
    appearance: none;
    border: 3px solid #e9e9e9;
    border-radius: 12px;
    padding: 0 32px;
    font-family: inherit;
    font-size: 24px;
    color: #000;
    background: transparent;
    outline: none;
}

.select-wrap > svg {
    position: absolute;
    right: 9px;
    top: 31px;
}

.check {
    display: flex;
    align-items: center;
    gap: 16px;
    align-self: end;
    height: 72px;
    padding-top: 10px;
    font-size: 23px;
    color: #555;
}

.check input {
    appearance: none;
    width: 24px;
    height: 24px;
    margin: 0;
    border: 2px solid #767676;
    border-radius: 5px;
    background: #fff;
}

/* open select list */
.dropdown {
    position: absolute;
    left: 2px;
    bottom: 72px;
    width: 532px;
    margin: 0;
    padding: 0;
    list-style: none;
    background: #fff;
    border: 2px solid #a8a8a8;
    border-radius: 14px;
    overflow: hidden;
    font-size: 23.5px;
    box-shadow: 0 45px 100px rgba(0, 0, 0, 0.36);
}

.dropdown li {
    height: 49px;
    line-height: 49px;
    padding-left: 30px;
    color: #000;
}

.dropdown li:last-child {
    height: 47px;
}

.dropdown li.selected {
    height: 48px;
    background: #1a66d6;
    color: #fff;
}

.form-actions {
    display: flex;
    justify-content: space-between;
    margin-top: 40px;
}

.actions-right {
    display: flex;
    gap: 40px;
}

.btn {
    height: 72px;
    width: 184px;
    border: none;
    border-radius: 36px;
    background: #ebebee;
    font-family: inherit;
    font-size: 25.5px;
    color: #000;
}

.btn.back {
    width: 158px;
}

.btn.primary {
    width: 148px;
    background: #1890ff;
    color: #fff;
}

.scrollbar {
    width: 10px;
    flex: none;
    padding-top: 621px;
}

.thumb {
    height: 840px;
    background: #4f5157;
}

.lan-status {
    position: absolute;
    right: 8px;
    bottom: 8px;
    width: 184px;
    height: 54px;
    background: #fff;
    border: 3px solid #ececec;
    border-radius: 12px;
    padding: 8px 8px 0;
    font-size: 19.5px;
    line-height: 24px;
    color: #000;
    word-spacing: -2px;
    white-space: nowrap;
}

.lan-text span {
    color: #22c55e;
    font-size: 20.6px;
}

.lan-bar {
    height: 8px;
    margin-top: 3px;
    border-radius: 4px;
    background: #9ca3af;
    overflow: hidden;
}

.lan-fill {
    width: 10%;
    height: 100%;
    background: #eab308;
}

/* taskbar */
.taskbar {
    height: 96px;
    flex: none;
    background: #182f30;
    border-top: 2px solid #3a4a4a;
    display: flex;
    align-items: center;
    padding-left: 585px;
    color: #fff;
    font-family: "Noto Sans", sans-serif;
}

.tb-apps {
    display: flex;
    align-items: center;
    height: 100%;
}

.tb-item {
    width: 88px;
    height: 80px;
    display: flex;
    align-items: center;
    justify-content: center;
    position: relative;
    padding-bottom: 6px;
}

.tb-item.running::after {
    content: "";
    position: absolute;
    left: 38px;
    bottom: 1px;
    width: 12px;
    height: 6px;
    border-radius: 3px;
    background: #8f9a9a;
}

.tb-item.active-app {
    background: #243d3e;
    border: 2px solid #2c4445;
    border-radius: 8px;
    width: 80px;
    margin: 0 4px;
}

.tb-item.active-app::after {
    left: 23px;
    width: 30px;
    bottom: 2px;
    background: #47bfff;
}

.badge {
    position: absolute;
    top: 0;
    right: 2px;
    min-width: 40px;
    height: 32px;
    border-radius: 16px;
    font-size: 22px;
    line-height: 32px;
    text-align: center;
    color: #000;
}

.badge.blue {
    background: #47bfff;
}

.badge.mail {
    min-width: 32px;
    display: flex;
    align-items: center;
    justify-content: center;
}

.badge.red {
    min-width: 32px;
    background: #c42b1c;
    color: #fff;
}

.me-text {
    font-family: "Liberation Serif", serif;
    font-size: 24px;
    font-weight: 700;
    fill: #fff;
}

.sp-text {
    font-family: "Noto Sans", sans-serif;
    font-size: 13px;
    font-weight: 700;
    fill: #fff;
}

.pre-text {
    font-family: "Liberation Mono", monospace;
    font-size: 12px;
    font-weight: 700;
    text-anchor: middle;
    fill: #111;
}

.m365-text {
    font-family: "Liberation Mono", monospace;
    font-size: 11px;
    font-weight: 700;
    text-anchor: middle;
    fill: #fff;
}

.tray {
    margin-left: auto;
    display: flex;
    align-items: center;
    padding-right: 39px;
    height: 100%;
}

.tray svg {
    flex: none;
}

.t-cloud {
    margin-left: 35px;
}

.t-net {
    margin-left: 30px;
}

.t-kbd {
    margin-left: 31px;
}

.t-wifi {
    margin-left: 33px;
}

.t-vol {
    margin-left: 15px;
}

.t-batt {
    margin-left: 16px;
}

.clock {
    margin-left: 31px;
    margin-bottom: 4px;
    font-size: 23.5px;
    line-height: 31px;
    text-align: right;
    white-space: nowrap;
}
```
